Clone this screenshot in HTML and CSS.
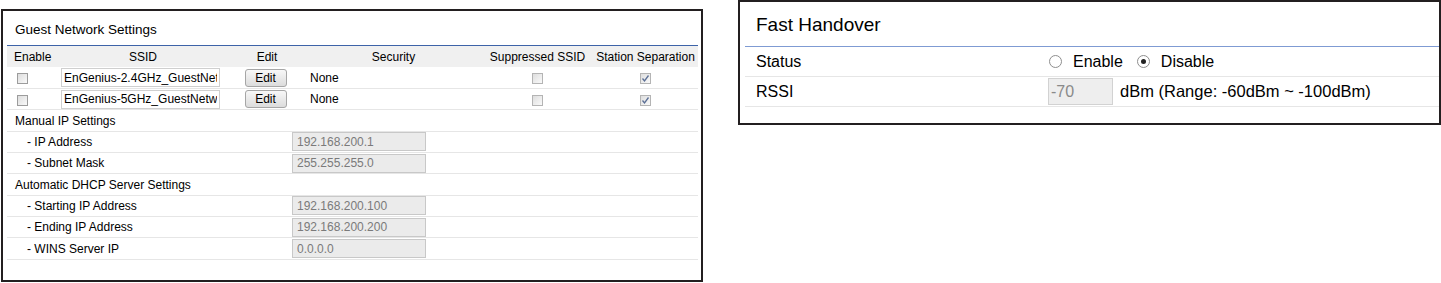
FILE: index.html
```html
<!DOCTYPE html>
<html lang="en">
<head>
    <meta charset="UTF-8">
    <title>Guest Network / Fast Handover</title>
    <link rel="stylesheet" href="styles.css">
</head>
<body>
<section class="panel guest">
    <div class="panel-title">Guest Network Settings</div>
    <table class="ssid-table">
        <colgroup>
            <col class="c-enable">
            <col class="c-ssid">
            <col class="c-edit">
            <col class="c-sec">
            <col class="c-supp">
            <col class="c-sep">
        </colgroup>
        <thead>
        <tr>
            <th class="left">Enable</th>
            <th>SSID</th>
            <th>Edit</th>
            <th>Security</th>
            <th>Suppressed SSID</th>
            <th>Station Separation</th>
        </tr>
        </thead>
        <tbody>
        <tr>
            <td class="cb-cell"><span class="cb"><svg width="11" height="11" viewBox="0 0 11 11"><rect x="0.5" y="0.5" width="10" height="10" fill="url(#g)" stroke="#9c9c9c"/></svg></span></td>
            <td><input class="ssid" type="text" value="EnGenius-2.4GHz_GuestNetwork"></td>
            <td class="center"><button class="btn-edit">Edit</button></td>
            <td class="sec">None</td>
            <td class="center"><span class="cb"><svg width="11" height="11" viewBox="0 0 11 11"><rect x="0.5" y="0.5" width="10" height="10" fill="url(#g)" stroke="#b4b4b4"/></svg></span></td>
            <td class="center"><span class="cb"><svg width="11" height="11" viewBox="0 0 11 11"><rect x="0.5" y="0.5" width="10" height="10" fill="url(#g)" stroke="#b4b4b4"/><path d="M2.5 5.5 L4.5 8 L8.5 2.5" fill="none" stroke="#5b6f95" stroke-width="1.3"/></svg></span></td>
        </tr>
        <tr>
            <td class="cb-cell"><span class="cb"><svg width="11" height="11" viewBox="0 0 11 11"><rect x="0.5" y="0.5" width="10" height="10" fill="url(#g)" stroke="#9c9c9c"/></svg></span></td>
            <td><input class="ssid" type="text" value="EnGenius-5GHz_GuestNetwork"></td>
            <td class="center"><button class="btn-edit">Edit</button></td>
            <td class="sec">None</td>
            <td class="center"><span class="cb"><svg width="11" height="11" viewBox="0 0 11 11"><rect x="0.5" y="0.5" width="10" height="10" fill="url(#g)" stroke="#b4b4b4"/></svg></span></td>
            <td class="center"><span class="cb"><svg width="11" height="11" viewBox="0 0 11 11"><rect x="0.5" y="0.5" width="10" height="10" fill="url(#g)" stroke="#b4b4b4"/><path d="M2.5 5.5 L4.5 8 L8.5 2.5" fill="none" stroke="#5b6f95" stroke-width="1.3"/></svg></span></td>
        </tr>
        </tbody>
    </table>

    <div class="ip-row group">Manual IP Settings</div>
    <div class="ip-row"><span class="sub">- IP Address</span><input class="ip" type="text" value="192.168.200.1" disabled></div>
    <div class="ip-row"><span class="sub">- Subnet Mask</span><input class="ip" type="text" value="255.255.255.0" disabled></div>
    <div class="ip-row group">Automatic DHCP Server Settings</div>
    <div class="ip-row"><span class="sub">- Starting IP Address</span><input class="ip" type="text" value="192.168.200.100" disabled></div>
    <div class="ip-row"><span class="sub">- Ending IP Address</span><input class="ip" type="text" value="192.168.200.200" disabled></div>
    <div class="ip-row"><span class="sub">- WINS Server IP</span><input class="ip" type="text" value="0.0.0.0" disabled></div>
</section>

<section class="panel handover">
    <div class="panel-title">Fast Handover</div>
    <div class="fh-row">
        <span class="fh-label">Status</span>
        <span class="fh-value">
            <span class="radio"></span><span class="radio-text">Enable</span>
            <span class="radio on"></span><span class="radio-text">Disable</span>
        </span>
    </div>
    <div class="fh-row">
        <span class="fh-label">RSSI</span>
        <span class="fh-value">
            <input class="rssi" type="text" value="-70" disabled>
            <span class="unit">dBm (Range: -60dBm ~ -100dBm)</span>
        </span>
    </div>
</section>

<svg width="0" height="0" class="defs">
    <defs>
        <linearGradient id="g" x1="0" y1="0" x2="1" y2="1">
            <stop offset="0" stop-color="#dcdcdc"/>
            <stop offset="1" stop-color="#fbfbfb"/>
        </linearGradient>
    </defs>
</svg>
</body>
</html>
```

FILE: styles.css
```css
* {
    margin: 0;
    padding: 0;
    box-sizing: border-box;
}
body {
    font-family: 'Liberation Sans', Arial, sans-serif;
    color: #000;
    background: #ffffff;
    display: flex;
    align-items: flex-start;
    width: 1441px;
    height: 283px;
    overflow: hidden;
}
.defs {
    position: absolute;
}
.panel {
    border: 2px solid #231f20;
    background: #ffffff;
}

/* guest network panel */
.guest {
    margin: 9px 0 0 1px;
    width: 702px;
    height: 273px;
    padding: 0 3px 0 4px;
    font-size: 12px;
}
.guest .panel-title {
    height: 35px;
    padding: 2px 0 0 8px;
    display: flex;
    align-items: center;
    font-size: 13.5px;
    border-bottom: 1px solid #3d63a8;
}
.ssid-table {
    width: 100%;
    border-collapse: collapse;
    table-layout: fixed;
}
.c-enable { width: 50px; }
.c-ssid { width: 172px; }
.c-edit { width: 76px; }
.c-sec { width: 177px; }
.c-supp { width: 111px; }
.c-sep { width: auto; }
.ssid-table th {
    height: 21.33px;
    background: #f0f0f0;
    font-weight: normal;
    text-align: center;
    white-space: nowrap;
}
.ssid-table th.left {
    text-align: left;
    padding-left: 7px;
}
.ssid-table td {
    height: 21.33px;
    border-bottom: 1px solid #e6e6e6;
    padding: 0;
}
.cb-cell {
    padding-left: 10px !important;
}
.cb {
    display: inline-block;
    width: 11px;
    height: 11px;
    vertical-align: middle;
}
.cb svg {
    display: block;
}
.center {
    text-align: center;
}
.sec {
    padding-left: 5px !important;
}
.ssid {
    display: block;
    margin-left: 4px;
    width: 159px;
    height: 19px;
    border: 1px solid #cfcfcf;
    padding: 0 2px;
    font: 12px 'Liberation Sans', Arial, sans-serif;
    color: #000;
    background: #ffffff;
}
.btn-edit {
    width: 42px;
    height: 18px;
    border: 1px solid #a6a6a6;
    border-radius: 3px;
    background: linear-gradient(#f8f8f8, #dcdcdc);
    font: 12px 'Liberation Sans', Arial, sans-serif;
    color: #000;
    vertical-align: middle;
    margin-left: -3px;
}
.ip-row {
    height: 21.33px;
    display: flex;
    align-items: center;
    border-bottom: 1px solid #e6e6e6;
}
.ip-row.group {
    padding-left: 8px;
}
.sub {
    width: 285px;
    padding-left: 20px;
}
.ip {
    width: 134px;
    height: 19px;
    border: 1px solid #c8c8c8;
    background: #ebebeb;
    padding: 0 4px;
    font: 12px 'Liberation Sans', Arial, sans-serif;
    color: #7a7a7a;
}

/* fast handover panel */
.handover {
    margin-left: 35px;
    width: 703px;
    height: 125px;
    padding-left: 5px;
    font-size: 16px;
}
.handover .panel-title {
    height: 45px;
    padding: 2px 0 0 11px;
    display: flex;
    align-items: center;
    font-size: 19px;
    border-bottom: 1px solid #7f9bd3;
}
.fh-row {
    height: 30px;
    display: flex;
    align-items: center;
    border-bottom: 1px solid #e6e6e6;
}
.fh-label {
    width: 303px;
    padding-left: 11px;
}
.fh-value {
    display: flex;
    align-items: center;
}
.radio {
    width: 13px;
    height: 13px;
    border: 1px solid #8e8e8e;
    border-radius: 50%;
    background: #ffffff;
    margin: 0 11px 0 1px;
    display: inline-flex;
    align-items: center;
    justify-content: center;
}
.radio.on::after {
    content: "";
    width: 5px;
    height: 5px;
    border-radius: 50%;
    background: #222;
}
.radio-text {
    margin-right: 13px;
}
.rssi {
    width: 65px;
    height: 27px;
    border: 1px solid #d2d2d2;
    background: #eeeeee;
    padding: 0 2px;
    font: 16px 'Liberation Sans', Arial, sans-serif;
    color: #8a8a8a;
}
.unit {
    margin-left: 7px;
    font-size: 16.5px;
}
```
